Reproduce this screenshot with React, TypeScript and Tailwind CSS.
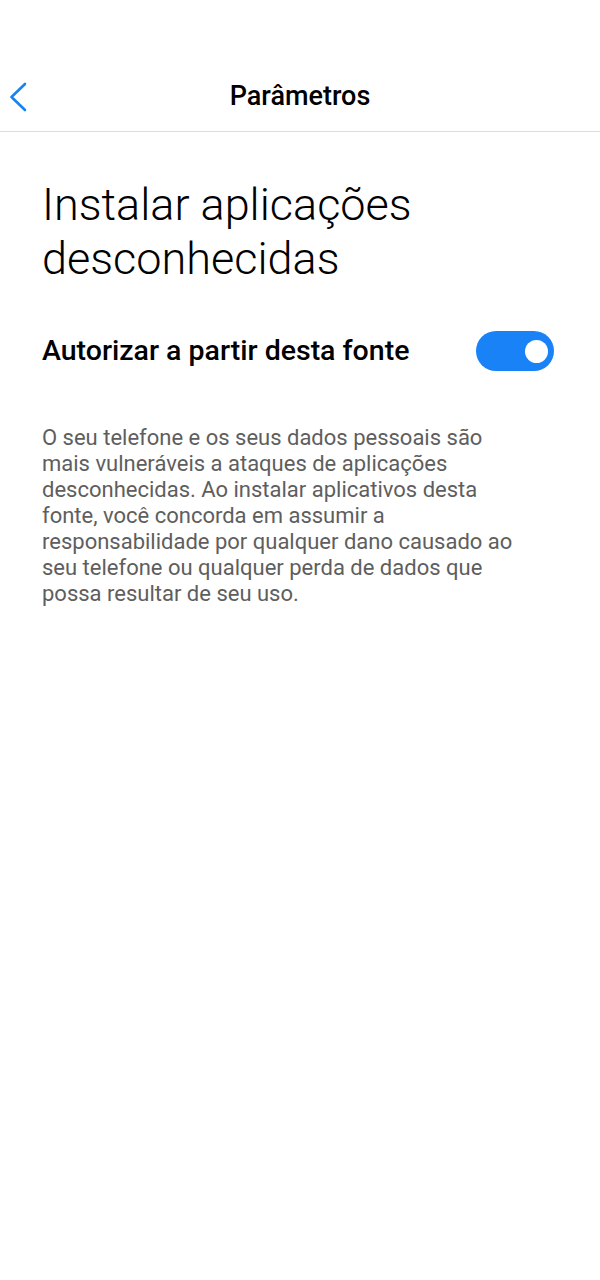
export default function App() {
  return (
    <main className="min-h-screen bg-white" style={{ fontFamily: 'Roboto, "Noto Sans", sans-serif' }}>
      {/* header */}
      <div className="h-[62px]" />
      <header className="relative flex h-[70px] items-center justify-center border-b border-[#dcdcdc]">
        <button className="absolute left-[8px] top-[20px]">
          <svg width="20" height="30" viewBox="0 0 20 30" fill="none">
            <path d="M17 2 L3.5 15 L17 28" stroke="#1783f0" strokeWidth="2.6" strokeLinecap="round" strokeLinejoin="round" />
          </svg>
        </button>
        <h1 className="text-[27px] font-medium text-black">Parâmetros</h1>
      </header>

      <section className="px-[42px]">
        <h2 className="mt-[46px] text-[45px] font-light leading-[54px] text-black">
          Instalar aplicações desconhecidas
        </h2>

        <div className="mt-[44px] flex items-center justify-between">
          <span className="text-[28.5px] font-medium text-black">Autorizar a partir desta fonte</span>
          <div className="mr-[4px] flex h-[40px] w-[78px] items-center justify-end rounded-full bg-[#1a82f7] pr-[6px]">
            <div className="h-[23px] w-[23px] rounded-full bg-white" />
          </div>
        </div>

        <p className="mt-[52px] text-[22px] leading-[26px] text-[#5e5e5e]">
          O seu telefone e os seus dados pessoais são<br />
          mais vulneráveis a ataques de aplicações<br />
          desconhecidas. Ao instalar aplicativos desta<br />
          fonte, você concorda em assumir a<br />
          responsabilidade por qualquer dano causado ao<br />
          seu telefone ou qualquer perda de dados que<br />
          possa resultar de seu uso.
        </p>
      </section>
    </main>
  );
}
